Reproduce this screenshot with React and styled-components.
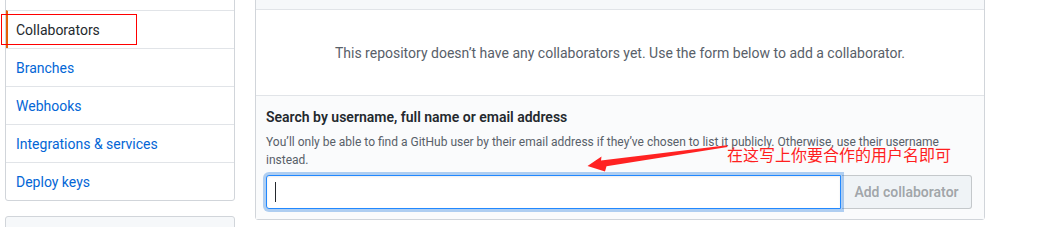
import React from "react";
import styled, { createGlobalStyle } from "styled-components";

const Global = createGlobalStyle`
  html, body { margin: 0; padding: 0; background: #fff; overflow: hidden; height: 227px; }
  body { font-family: Roboto, "Noto Sans", "Liberation Sans", sans-serif; color: #24292e; }
  #root { height: 227px; overflow: hidden; }
  * { box-sizing: border-box; }
`;

const Page = styled.div`
  position: relative;
  display: flex;
  align-items: flex-start;
  gap: 20px;
  padding-left: 5px;
  margin-top: -28px;
  width: 1038px;
`;

const SideCol = styled.div`
  width: 230px;
  display: flex;
  flex-direction: column;
  gap: 15px;
`;

const Menu = styled.nav`
  border: 1px solid #d1d5da;
  border-radius: 3px;
  background: #fff;
  display: flex;
  flex-direction: column;
`;

const MenuItem = styled.a`
  display: block;
  height: ${(p) => (p.$first ? "37px" : "38px")};
  line-height: 38px;
  border-top: ${(p) => (p.$first ? "none" : "1px solid #e1e4e8")};
  padding-left: ${(p) => (p.$selected ? "8px" : "10px")};
  border-left: ${(p) => (p.$selected ? "2px solid #e36209" : "none")};
  font-size: 14px;
  color: ${(p) => (p.$selected ? "#24292e" : "#0366d6")};
  text-decoration: none;
  white-space: nowrap;
`;

const SecondBox = styled.div`
  height: 40px;
  border: 1px solid #d1d5da;
  border-radius: 3px;
  background: #f6f8fa;
`;

const Panel = styled.section`
  width: 730px;
  border: 1px solid #d1d5da;
  border-radius: 3px;
  display: flex;
  flex-direction: column;
`;

const PanelHead = styled.div`
  height: 37px;
  background: #f6f8fa;
  border-bottom: 1px solid #e1e4e8;
`;

const Blank = styled.div`
  padding: 33px 0 31px;
  line-height: 21px;
  font-size: 14px;
  color: #586069;
  text-align: center;
  background: #fff;
  border-bottom: 1px solid #e1e4e8;
`;

const Form = styled.div`
  background: #fafbfc;
  padding: 10px 12px 10px 10px;
  display: flex;
  flex-direction: column;
`;

const Label = styled.label`
  font-size: 14px;
  font-weight: 600;
  line-height: 21px;
  padding-top: 1px;
  color: #24292e;
`;

const Note = styled.p`
  margin: 5px 0 6px;
  font-size: 12px;
  line-height: 18px;
  color: #586069;
`;

const Group = styled.div`
  display: flex;
  height: 34px;
`;

const Field = styled.div`
  position: relative;
  flex: 1;
  display: flex;
  z-index: 1;
`;

const Input = styled.input`
  flex: 1;
  height: 34px;
  padding: 6px 8px;
  font-size: 14px;
  border: 1px solid #2188ff;
  border-radius: 3px 0 0 3px;
  outline: none;
  background: #fff;
  box-shadow: inset 0 1px 2px rgba(27, 31, 35, 0.075), 0 0 0 3px rgba(3, 102, 214, 0.3);
`;

const Caret = styled.span`
  position: absolute;
  left: 9px;
  top: 7px;
  width: 1px;
  height: 20px;
  background: #24292e;
`;

const Button = styled.button`
  width: 130px;
  margin-left: 1px;
  height: 34px;
  font-family: inherit;
  font-size: 14px;
  font-weight: 600;
  color: rgba(36, 41, 46, 0.4);
  background: #eff3f6;
  border: 1px solid rgba(27, 31, 35, 0.2);
  border-left: none;
  border-radius: 0 3px 3px 0;
  padding: 0 10px;
  white-space: nowrap;
`;

const RedBox = styled.div`
  position: absolute;
  left: 1px;
  top: 42px;
  width: 136px;
  height: 31px;
  border: 1px solid #f00;
  pointer-events: none;
`;

const Annotation = styled.div`
  position: absolute;
  left: 727px;
  top: 174px;
  font-family: "Noto Sans CJK SC", sans-serif;
  font-size: 16px;
  line-height: 16px;
  color: #ff1f1f;
  white-space: nowrap;
`;

const ArrowSvg = styled.svg`
  position: absolute;
  left: 0;
  top: 28px;
  pointer-events: none;
`;

const items = ["Collaborators", "Branches", "Webhooks", "Integrations & services", "Deploy keys"];

export default function App() {
  return (
    <>
      <Global />
      <Page>
        <SideCol>
          <Menu>
            <MenuItem $first href="#">Options</MenuItem>
            {items.map((t, i) => (
              <MenuItem key={t} href="#" $selected={i === 0}>
                {t}
              </MenuItem>
            ))}
          </Menu>
          <SecondBox />
        </SideCol>
        <Panel>
          <PanelHead />
          <Blank>
            This repository doesn’t have any collaborators yet. Use the form below to add a collaborator.
          </Blank>
          <Form>
            <Label>Search by username, full name or email address</Label>
            <Note>
              You’ll only be able to find a GitHub user by their email address if they’ve chosen to list it
              publicly. Otherwise, use their username instead.
            </Note>
            <Group>
              <Field>
                <Input type="text" />
                <Caret />
              </Field>
              <Button disabled>Add collaborator</Button>
            </Group>
          </Form>
        </Panel>
        <RedBox />
        <Annotation>在这写上你要合作的用户名即可</Annotation>
        <ArrowSvg width="1038" height="227" viewBox="0 0 1038 227">
          <polygon
            points="587.5,166 601.5,156.5 601,160.5 727,145.3 727.5,147 606.5,166.3 605,171.5"
            fill="#f22"
          />
        </ArrowSvg>
      </Page>
    </>
  );
}
